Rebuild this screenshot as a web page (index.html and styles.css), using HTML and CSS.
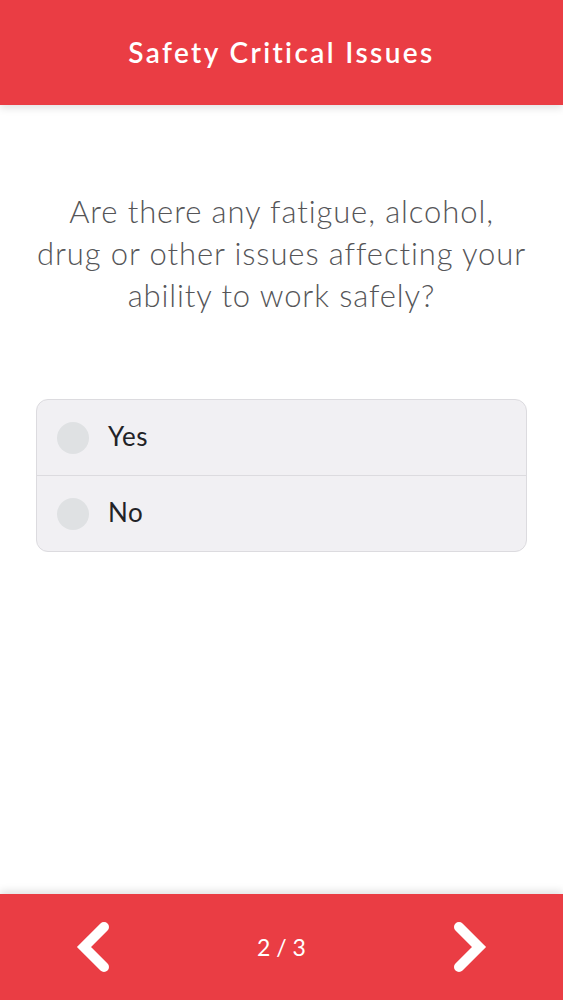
FILE: index.html
```html
<!DOCTYPE html>
<html>
<head>
<meta charset="utf-8">
<link rel="stylesheet" href="styles.css">
</head>
<body>
<div class="app">
  <header class="topbar">
    <h1 class="title">Safety Critical Issues</h1>
  </header>
  <main class="content">
    <p class="question">Are there any fatigue, alcohol,<br>drug or other issues affecting your<br>ability to work safely?</p>
    <div class="options">
      <label class="option">
        <span class="radio"></span>
        <span class="option-label">Yes</span>
      </label>
      <label class="option">
        <span class="radio"></span>
        <span class="option-label">No</span>
      </label>
    </div>
  </main>
  <footer class="bottombar">
    <button class="nav-btn" aria-label="Previous">
      <svg width="34" height="50" viewBox="0 0 34 50"><path d="M28 5 L8 25 L28 45" fill="none" stroke="#fff" stroke-width="10" stroke-linecap="round" stroke-linejoin="miter"/></svg>
    </button>
    <span class="pager">2 / 3</span>
    <button class="nav-btn" aria-label="Next">
      <svg width="34" height="50" viewBox="0 0 34 50"><path d="M6 5 L26 25 L6 45" fill="none" stroke="#fff" stroke-width="10" stroke-linecap="round" stroke-linejoin="miter"/></svg>
    </button>
  </footer>
</div>
</body>
</html>
```
FILE: styles.css
```css
html, body {
  margin: 0;
  padding: 0;
  background: #ffffff;
}
.app {
  height: 1000px;
  display: flex;
  flex-direction: column;
  font-family: Lato, "Open Sans", sans-serif;
}
.topbar {
  height: 105px;
  background: #ea3d44;
  display: flex;
  align-items: center;
  justify-content: center;
  box-shadow: 0 3px 8px rgba(0,0,0,0.12);
  position: relative;
  z-index: 1;
}
.title {
  margin: 0 0 2px;
  color: #fff;
  font-size: 28px;
  font-weight: 600;
  letter-spacing: 2.4px;
}
.content {
  flex: 1;
  padding: 85px 20px 0;
}
.question {
  margin: 0;
  text-align: center;
  font-size: 31px;
  line-height: 42px;
  font-weight: 300;
  letter-spacing: 0.9px;
  color: #555558;
}
.options {
  margin: 83px 16px 0;
  background: #f1f0f3;
  border: 1px solid #dcdbdf;
  border-radius: 12px;
  overflow: hidden;
}
.option {
  height: 75px;
  display: flex;
  align-items: center;
  padding-left: 20px;
  gap: 19px;
}
.option-label {
  font-size: 26px;
  letter-spacing: 0.6px;
  color: #222226;
  padding-bottom: 4px;
}
.option + .option {
  border-top: 1px solid #dcdbdf;
}
.radio {
  width: 32px;
  height: 32px;
  border-radius: 50%;
  background: #dfe1e3;
}
.bottombar {
  height: 106px;
  background: #ea3d44;
  display: flex;
  align-items: center;
  justify-content: space-between;
  padding: 0 76px 0 76px;
  box-shadow: 0 -3px 8px rgba(0,0,0,0.12);
  position: relative;
}
.nav-btn {
  background: none;
  border: 0;
  padding: 0;
  width: 34px;
  height: 50px;
  display: flex;
}
.pager {
  color: #fff;
  font-size: 23px;
  letter-spacing: 0px;
}
```
